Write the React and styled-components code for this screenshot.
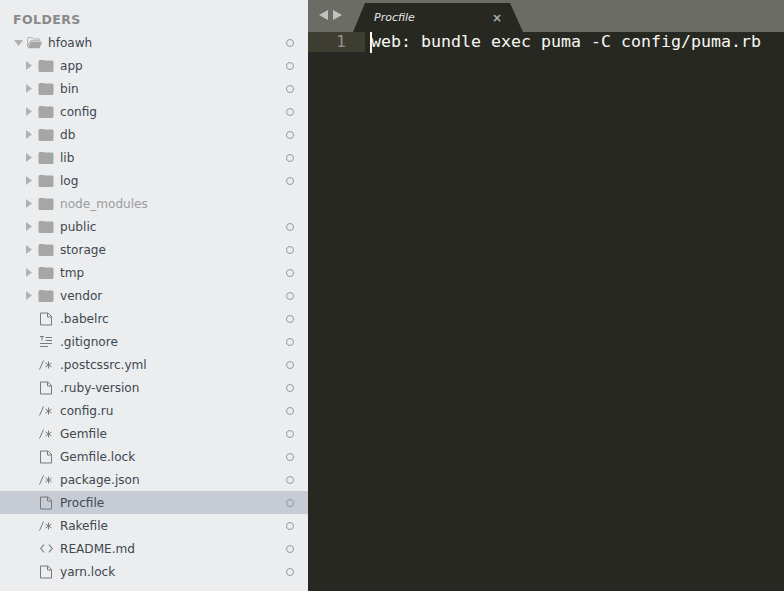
import React from "react";
import styled, { createGlobalStyle } from "styled-components";

const GlobalStyle = createGlobalStyle`
  html, body {
    margin: 0;
    padding: 0;
    height: 100%;
    overflow: hidden;
  }
  #root {
    height: 100%;
  }
`;

const Window = styled.div`
  display: flex;
  width: 784px;
  height: 591px;
  overflow: hidden;
`;

const Sidebar = styled.aside`
  width: 308px;
  flex-shrink: 0;
  background: #ebedef;
  font-family: "DejaVu Sans", sans-serif;
  font-size: 12.1px;
  color: #404850;
`;

const Heading = styled.h2`
  margin: 0;
  height: 31px;
  padding: 12px 0 0 13px;
  box-sizing: border-box;
  font-size: 12.5px;
  line-height: 15px;
  font-weight: 700;
  letter-spacing: 0.45px;
  color: #8a8a8a;
`;

const Row = styled.div`
  display: flex;
  align-items: center;
  height: 23px;
  padding-left: ${(p) => p.$indent}px;
  background: ${(p) => (p.$selected ? "#c7cbd3" : "transparent")};
  color: ${(p) => (p.$muted ? "#9a9c9e" : "#404850")};
`;

const IconSlot = styled.span`
  display: flex;
  align-items: center;
  justify-content: center;
  flex-shrink: 0;
  width: 16px;
  height: 16px;
`;

const Arrow = styled(IconSlot)`
  width: 10px;
  margin-right: 4px;
`;

const Name = styled.span`
  flex: 1;
  margin-left: ${(p) => p.$gap}px;
  white-space: nowrap;
`;

const Dot = styled.span`
  width: 6px;
  height: 6px;
  margin-right: 14px;
  border: 1.5px solid #98999c;
  border-radius: 50%;
  flex-shrink: 0;
`;

const Editor = styled.main`
  flex: 1;
  display: flex;
  flex-direction: column;
  background: #272822;
  min-width: 0;
`;

const TabBar = styled.div`
  display: flex;
  align-items: flex-end;
  height: 32px;
  background: #6c6c66;
  flex-shrink: 0;
`;

const Nav = styled.div`
  display: flex;
  align-items: center;
  gap: 5px;
  width: 36px;
  height: 32px;
  padding: 0 0 2px 11px;
  box-sizing: border-box;
  flex-shrink: 0;
`;

const Tab = styled.div`
  display: flex;
  align-items: center;
  justify-content: space-between;
  width: 170px;
  height: 29px;
  margin-left: 9px;
  padding: 0 21px;
  box-sizing: border-box;
  background: #272822;
  clip-path: polygon(12px 0, 157px 0, 170px 100%, 0 100%);
`;

const TabTitle = styled.span`
  font-family: "DejaVu Sans", sans-serif;
  font-size: 11px;
  font-style: italic;
  color: #e6e6e2;
`;

const TabClose = styled.span`
  font-family: "DejaVu Sans", sans-serif;
  font-size: 12px;
  font-weight: 700;
  line-height: 1;
  color: #b0b0ac;
`;

const CodeLine = styled.div`
  display: flex;
  height: 20px;
  font-family: "DejaVu Sans Mono", monospace;
  font-size: 16.61px;
  line-height: 19px;
`;

const Gutter = styled.div`
  width: 57px;
  padding-right: 19px;
  box-sizing: border-box;
  text-align: right;
  background: #3e3d32;
  color: #8f908a;
  flex-shrink: 0;
`;

const Code = styled.div`
  margin-left: 6px;
  white-space: pre;
  color: #f8f8f2;
  position: relative;
`;

const Caret = styled.span`
  position: absolute;
  left: -1px;
  top: 0;
  width: 2px;
  height: 21px;
  background: #f8f8f0;
`;

const GREY = "#a6a6a6";

const FolderIcon = () => (
  <svg width="16" height="14" viewBox="0 0 16 14">
    <path d="M0.5 2.5 Q0.5 1 2 1 H6 L6.8 1.6 H14 Q15.5 1.6 15.5 3 V11.5 Q15.5 13 14 13 H2 Q0.5 13 0.5 11.5 Z" fill={GREY} />
  </svg>
);

const OpenFolderIcon = () => (
  <svg width="18" height="14" viewBox="0 0 18 14">
    <path d="M0.5 11 V2 Q0.5 1 1.5 1 H6 L7.5 2.5 H13.5 Q14.5 2.5 14.5 3.5 V4.5 H4 Z" fill="none" stroke={GREY} strokeWidth="1" />
    <path d="M4.2 5.5 H17 L14.5 12.2 Q14.2 13 13.4 13 H1 Z" fill={GREY} />
  </svg>
);

const FileIcon = () => (
  <svg width="14" height="14" viewBox="0 0 14 14" fill="none" stroke="#77797c" strokeWidth="1">
    <path d="M1.5 1 H9 L12.5 4.5 V13 H1.5 Z M8.5 1 V5 H12.5" />
  </svg>
);

const TextIcon = () => (
  <svg width="14" height="11" viewBox="0 0 14 11" fill="none" stroke="#77797c" strokeWidth="1">
    <path d="M1 0.5 H5 M3 0.5 V4.5 M6.5 1.5 H13 M6.5 4.5 H13 M1 7.5 H13 M1 10.5 H9" />
  </svg>
);

const CommentIcon = () => (
  <svg width="14" height="10" viewBox="0 0 14 10" fill="none" stroke="#77797c" strokeWidth="1">
    <path d="M0.5 9.5 L4.5 0.5 M9.5 1.5 V8.5 M6.5 3 L12.5 7 M12.5 3 L6.5 7" />
  </svg>
);

const CodeIcon = () => (
  <svg width="13" height="9" viewBox="0 0 13 9" fill="none" stroke="#77797c" strokeWidth="1.1">
    <path d="M4 0.7 L0.8 4.5 L4 8.3 M9 0.7 L12.2 4.5 L9 8.3" />
  </svg>
);

const TriangleRight = () => (
  <svg width="6" height="9" viewBox="0 0 6 9"><path d="M0 0 L6 4.5 L0 9 Z" fill="#b0b1b2" /></svg>
);

const TriangleDown = () => (
  <svg width="9" height="6" viewBox="0 0 9 6"><path d="M0 0 H9 L4.5 6 Z" fill="#b0b1b2" /></svg>
);

const NavArrow = ({ flip }) => (
  <svg width="9" height="10" viewBox="0 0 9 10">
    <path d={flip ? "M0 0 L9 5 L0 10 Z" : "M9 0 L0 5 L9 10 Z"} fill="#c2c2bf" />
  </svg>
);

const folders = ["app", "bin", "config", "db", "lib", "log", "node_modules", "public", "storage", "tmp", "vendor"];

const files = [
  { name: ".babelrc", icon: FileIcon },
  { name: ".gitignore", icon: TextIcon },
  { name: ".postcssrc.yml", icon: CommentIcon },
  { name: ".ruby-version", icon: FileIcon },
  { name: "config.ru", icon: CommentIcon },
  { name: "Gemfile", icon: CommentIcon },
  { name: "Gemfile.lock", icon: FileIcon },
  { name: "package.json", icon: CommentIcon },
  { name: "Procfile", icon: FileIcon, selected: true },
  { name: "Rakefile", icon: CommentIcon },
  { name: "README.md", icon: CodeIcon },
  { name: "yarn.lock", icon: FileIcon },
];

export default function App() {
  return (
    <Window>
      <GlobalStyle />
      <Sidebar>
        <Heading>FOLDERS</Heading>
        <Row $indent={13}>
          <Arrow><TriangleDown /></Arrow>
          <IconSlot><OpenFolderIcon /></IconSlot>
          <Name $gap={5}>hfoawh</Name>
          <Dot />
        </Row>
        {folders.map((name) => {
          const ignored = name === "node_modules";
          return (
            <Row key={name} $indent={24} $muted={ignored}>
              <Arrow><TriangleRight /></Arrow>
              <IconSlot><FolderIcon /></IconSlot>
              <Name $gap={6}>{name}</Name>
              {!ignored && <Dot />}
            </Row>
          );
        })}
        {files.map(({ name, icon: Icon, selected }) => (
          <Row key={name} $indent={38} $selected={selected}>
            <IconSlot><Icon /></IconSlot>
            <Name $gap={6}>{name}</Name>
            <Dot />
          </Row>
        ))}
      </Sidebar>
      <Editor>
        <TabBar>
          <Nav>
            <NavArrow />
            <NavArrow flip />
          </Nav>
          <Tab>
            <TabTitle>Procfile</TabTitle>
            <TabClose>×</TabClose>
          </Tab>
        </TabBar>
        <CodeLine>
          <Gutter>1</Gutter>
          <Code>
            <Caret />
            web: bundle exec puma -C config/puma.rb
          </Code>
        </CodeLine>
      </Editor>
    </Window>
  );
}
